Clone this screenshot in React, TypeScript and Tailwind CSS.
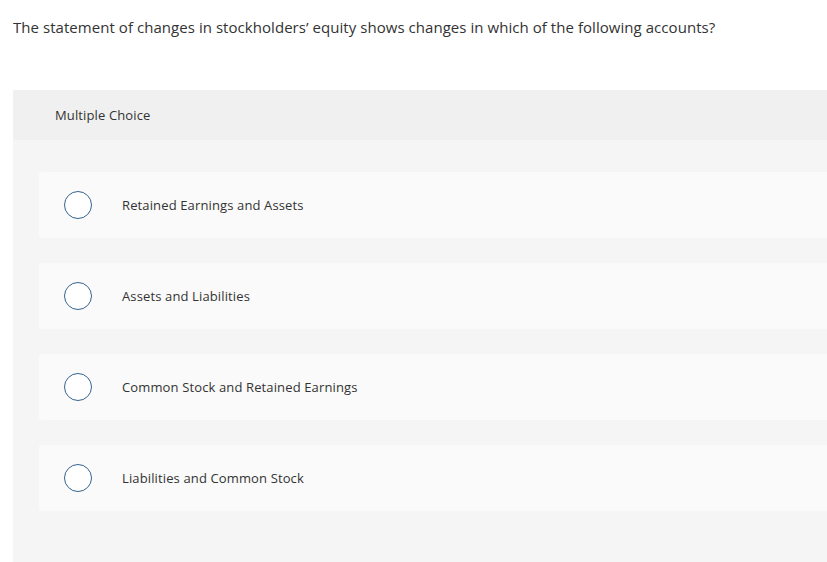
import React from "react";

const options = [
  "Retained Earnings and Assets",
  "Assets and Liabilities",
  "Common Stock and Retained Earnings",
  "Liabilities and Common Stock",
];

export default function App() {
  return (
    <div
      className="w-[827px] h-[562px] overflow-hidden bg-white text-[#333333]"
      style={{ fontFamily: "'Open Sans', Lato, sans-serif" }}
    >
      <div className="pt-[17px] pl-[13px] text-[15px] leading-[20px] tracking-[0.05px]">
        The statement of changes in stockholders’ equity shows changes in which of the following accounts?
      </div>
      <div className="ml-[13px] mt-[53px] w-[840px] h-[480px] bg-[#f5f5f5]">
        <div className="h-[50px] bg-[#f0f0f0] flex items-center pl-[42px] pt-[2px] text-[13px] tracking-[0.13px]">
          Multiple Choice
        </div>
        <div className="flex flex-col gap-[25px] pt-[32px] pl-[26px]">
          {options.map((o) => (
            <div
              key={o}
              className="h-[66px] bg-[#fafafa] rounded-[3px] flex items-center pl-[25px] text-[13px] tracking-[0.13px]"
            >
              <div className="w-[28px] h-[28px] rounded-full border-[1.5px] border-[#35638f] bg-white shrink-0" />
              <div className="ml-[30px] pt-[2px]">{o}</div>
            </div>
          ))}
        </div>
      </div>
    </div>
  );
}
